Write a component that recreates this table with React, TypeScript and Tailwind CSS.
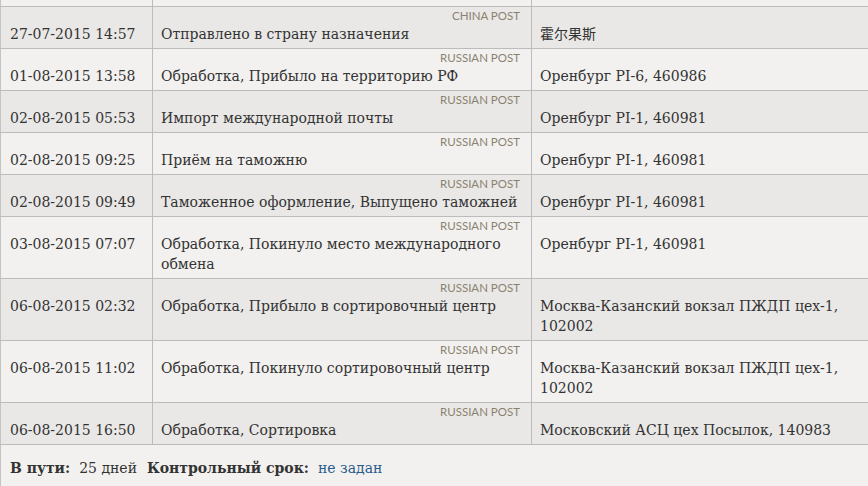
import React from "react";

type Ev = {
  date: string;
  op: string;
  post: string;
  place: string;
};

const events: Ev[] = [
  { date: "27-07-2015 14:57", op: "Отправлено в страну назначения", post: "CHINA POST", place: "霍尔果斯" },
  { date: "01-08-2015 13:58", op: "Обработка, Прибыло на территорию РФ", post: "RUSSIAN POST", place: "Оренбург PI-6, 460986" },
  { date: "02-08-2015 05:53", op: "Импорт международной почты", post: "RUSSIAN POST", place: "Оренбург PI-1, 460981" },
  { date: "02-08-2015 09:25", op: "Приём на таможню", post: "RUSSIAN POST", place: "Оренбург PI-1, 460981" },
  { date: "02-08-2015 09:49", op: "Таможенное оформление, Выпущено таможней", post: "RUSSIAN POST", place: "Оренбург PI-1, 460981" },
  { date: "03-08-2015 07:07", op: "Обработка, Покинуло место международного обмена", post: "RUSSIAN POST", place: "Оренбург PI-1, 460981" },
  { date: "06-08-2015 02:32", op: "Обработка, Прибыло в сортировочный центр", post: "RUSSIAN POST", place: "Москва-Казанский вокзал ПЖДП цех-1, 102002" },
  { date: "06-08-2015 11:02", op: "Обработка, Покинуло сортировочный центр", post: "RUSSIAN POST", place: "Москва-Казанский вокзал ПЖДП цех-1, 102002" },
  { date: "06-08-2015 16:50", op: "Обработка, Сортировка", post: "RUSSIAN POST", place: "Московский АСЦ цех Посылок, 140983" },
];

export default function App() {
  return (
    <div
      className="w-[868px] h-[486px] overflow-hidden bg-[#f2f1ef] text-[14px] leading-[20px] text-[#333]"
      style={{ fontFamily: '"DejaVu Serif", "Noto Sans CJK SC", serif' }}
    >
      {/* tail of the previous row */}
      <div className="grid grid-cols-[152px_379px_1fr] h-[7px] border-b border-[#bcbcbc]">
        <div className="border-l border-[#c4c4c4]" />
        <div className="border-l border-[#bcbcbc]" />
        <div className="border-l border-[#bcbcbc]" />
      </div>

      {events.map((e, i) => (
        <div
          key={i}
          className={
            "grid grid-cols-[152px_379px_1fr] border-b border-[#bcbcbc] " +
            (i % 2 === 0 ? "bg-[#e9e8e6]" : "bg-[#f2f1ef]")
          }
        >
          <div className="border-l border-[#c4c4c4] pl-[9px] pt-[17px] pb-[4px] whitespace-nowrap">
            {e.date}
          </div>
          <div className="relative border-l border-[#bcbcbc] pl-[8px] pr-[2px] pt-[17px] pb-[4px]">
            <span
              className="absolute top-[3px] right-[11px] text-[11.5px] leading-[12px] text-[#8a8270]"
              style={{ fontFamily: "Lato, sans-serif" }}
            >
              {e.post}
            </span>
            {e.op}
          </div>
          <div className="border-l border-[#bcbcbc] pl-[8px] pr-[20px] pt-[17px] pb-[4px]">
            {e.place}
          </div>
        </div>
      ))}

      <div className="border-l border-[#c4c4c4] h-[42px] pl-[9px] pt-[13px] flex gap-[9px]">
        <span className="font-bold">В пути:</span>
        <span>25 дней</span>
        <span className="font-bold ml-[1px]">Контрольный срок:</span>
        <span className="text-[#2a5b8c]">не задан</span>
      </div>
    </div>
  );
}
